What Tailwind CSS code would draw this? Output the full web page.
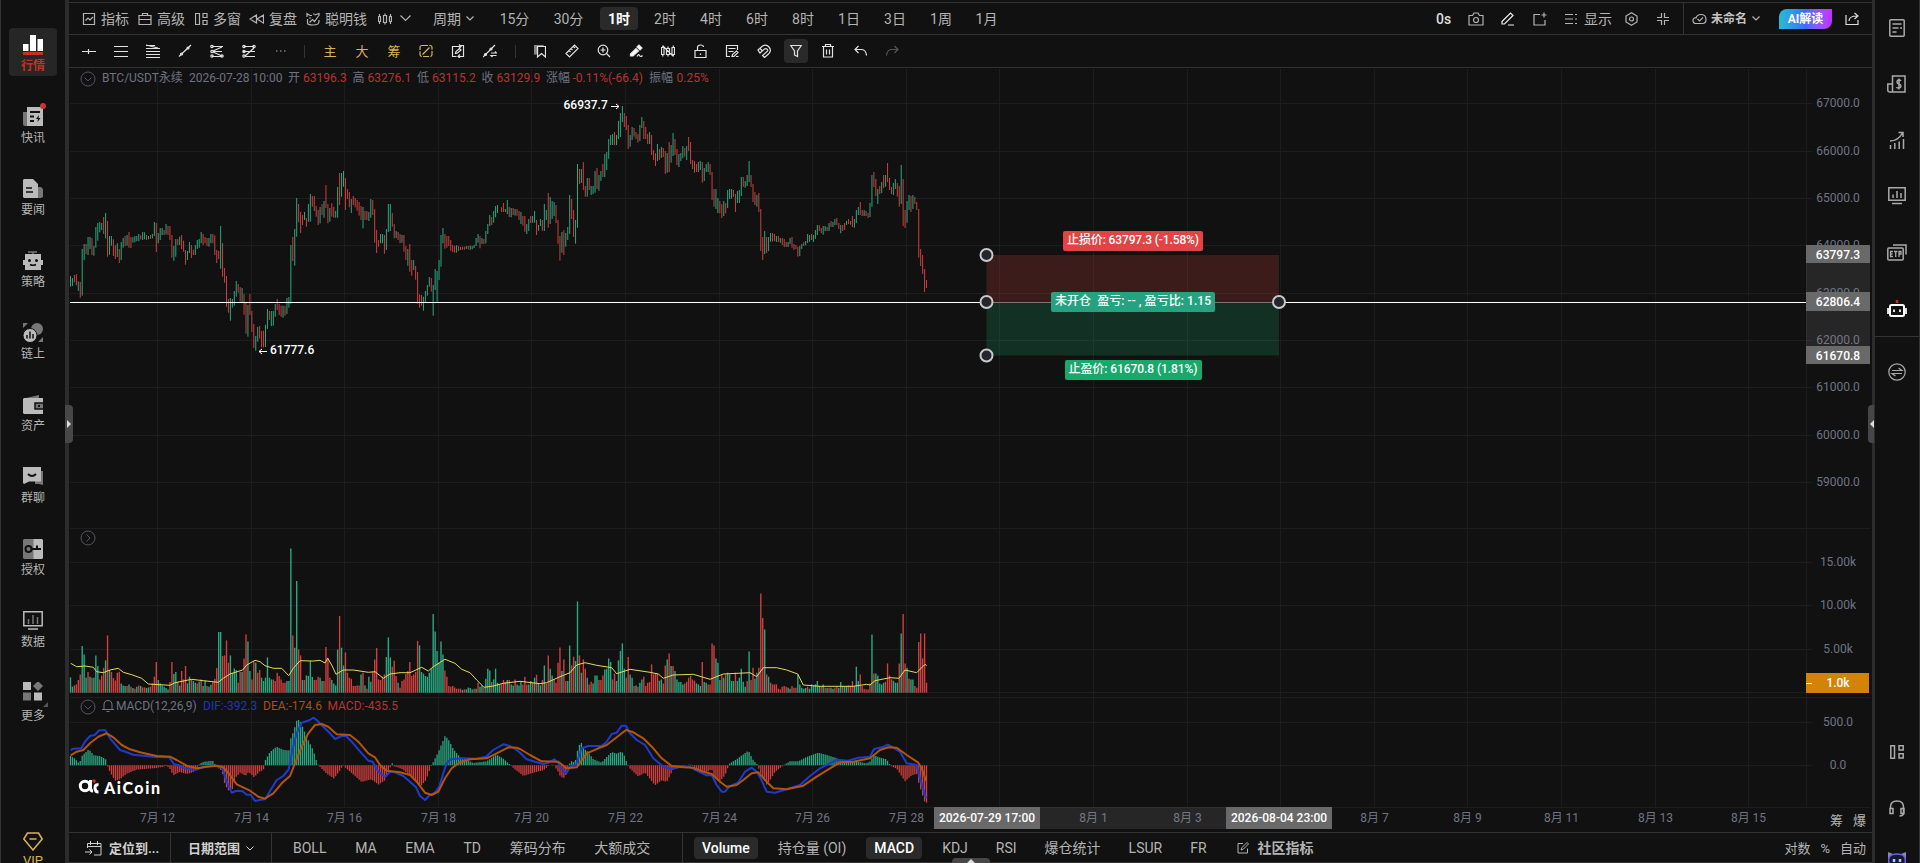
<!DOCTYPE html>
<html lang="zh-CN">
<head>
    <meta charset="UTF-8">
    <meta name="viewport" content="width=device-width, initial-scale=1.0">
    <title>AiCoin - BTC/USDT永续</title>
    <script src="https://cdn.jsdelivr.net/npm/@tailwindcss/browser@4"></script>
</head>
<body class="bg-[#111111] text-[#b4b4b4] font-['Roboto','Noto_Sans_CJK_SC',sans-serif] h-screen w-screen overflow-hidden flex">

    <!-- left navigation -->
    <nav class="relative w-[65px] shrink-0 border-l border-[#333] flex flex-col items-center text-xs fill-none stroke-none">
        <div class="mt-7 w-12 h-12 shrink-0 rounded bg-[#262626] flex flex-col items-center pt-[7px] text-[#c5301f] font-bold">
            <svg class="w-5 h-5 shrink-0" viewBox="0 0 20 20"><path fill="#fff" d="M0 9h5.500v7H0zM7 0h6v16H7zM14.500 4H20v12h-5.500z"/><path fill="#c5301f" d="M0 17h20v3H0z"/></svg>
            <span class="leading-4 mt-[3px]">行情</span>
        </div>
        <a class="relative h-[72px] mt-[31px] flex flex-col items-center shrink-0">
            <svg class="w-5 h-5" viewBox="0 0 20 20"><path fill="#777" d="M0 5h5v14H2a2 2 0 0 1-2-2z"/><path fill="#bbb" d="M4 0h14l2 2v17H4z"/><path stroke="#111" stroke-width="1.800" d="M7 5h10M7 9.500h4M7 14h4"/><path fill="#111" d="M16 8l-3 4h2l-.5 3 3-4h-2z"/></svg>
            <span class="absolute -top-[4px] left-[19px] w-[6px] h-[6px] rounded-full bg-[#c73635]"></span>
            <span class="leading-4 mt-[3px]">快讯</span>
        </a>
        <a class="h-[72px] flex flex-col items-center shrink-0">
            <svg class="w-5 h-5" viewBox="0 0 20 20"><path fill="#777" d="M13 8h5l2 2v8l-2 1h-5z"/><path fill="#bbb" d="M1 0h9l5 5v14H1l-1-1V1z"/><path stroke="#111" stroke-width="1.600" d="M3 9h6M3 13h7"/></svg>
            <span class="leading-4 mt-[3px]">要闻</span>
        </a>
        <a class="h-[72px] flex flex-col items-center shrink-0">
            <svg class="w-5 h-5" viewBox="0 0 20 20"><path stroke="#777" stroke-width="1.500" d="M5 1h9M10 1v3"/><path fill="#bbb" d="M2 3h16v6h2v5h-2v5H2v-5H0V9h2z"/><circle cx="6.500" cy="9.500" r="1.500" fill="#111"/><circle cx="13.500" cy="9.500" r="1.500" fill="#111"/><path stroke="#111" stroke-width="1.500" d="M7 13.500q3 1.500 6 0"/></svg>
            <span class="leading-4 mt-[3px]">策略</span>
        </a>
        <a class="h-[72px] flex flex-col items-center shrink-0">
            <svg class="w-5 h-5" viewBox="0 0 20 20"><circle cx="14" cy="6" r="6" fill="#777"/><path fill="#777" d="M0 0h5L0 5zM20 19h-5l5-5z"/><circle cx="7" cy="12.500" r="7" fill="#bbb" stroke="#111"/><path stroke="#111" stroke-width="1.500" d="M4 12v3.500M7 8.500v7M10 11v4.500"/></svg>
            <span class="leading-4 mt-[3px]">链上</span>
        </a>
        <a class="h-[72px] flex flex-col items-center shrink-0">
            <svg class="w-5 h-5" viewBox="0 0 20 20"><path fill="#777" d="M3 3l13-3v3z"/><path fill="#bbb" d="M1 3h19v16H1l-1-1V4z"/><path stroke="#111" stroke-width="1.500" fill="#777" d="M20 8h-8v6h8"/><path stroke="#111" stroke-width="2" d="M15 11h2"/></svg>
            <span class="leading-4 mt-[3px]">资产</span>
        </a>
        <a class="h-[72px] flex flex-col items-center shrink-0">
            <svg class="w-5 h-5" viewBox="0 0 20 20"><path fill="#777" d="M12 4h8v14l-4-1h-4z"/><path fill="#bbb" d="M0 0h18v14.500H6L1 17l-1-1z"/><path stroke="#111" stroke-width="1.800" d="M5 7q4 4 8 0"/></svg>
            <span class="leading-4 mt-[3px]">群聊</span>
        </a>
        <a class="h-[72px] flex flex-col items-center shrink-0">
            <svg class="w-5 h-5" viewBox="0 0 20 20"><path fill="#777" d="M1 0h10v20H1l-1-1V1z"/><path fill="#bbb" d="M10.500 0H19l1 1v18l-1 1h-8.500z"/><circle cx="5.500" cy="10" r="3" stroke="#111" stroke-width="2"/><path stroke="#111" stroke-width="2" d="M8 10h10M14 6.500V10"/></svg>
            <span class="leading-4 mt-[3px]">授权</span>
        </a>
        <a class="h-[71px] flex flex-col items-center shrink-0">
            <svg class="w-5 h-5" viewBox="0 0 20 20"><path stroke="#bbb" stroke-width="1.500" d="M.8.8h18.400v14H.8zM5 18h10"/><path stroke="#777" stroke-width="1.500" d="M5.500 8v5M10 4v9M14.500 6v7"/></svg>
            <span class="leading-4 mt-[3px]">数据</span>
        </a>
        <a class="relative h-[149px] flex flex-col items-center shrink-0">
            <svg class="w-5 h-5" viewBox="0 0 20 20"><path fill="#bbb" d="M0 0h8v8H0zM11 10.500h8v8h-8z"/><path fill="#777" d="M15 -1l5 5-5 5-5-5zM0 10.500h8v8H0z"/></svg>
            <svg class="absolute top-[20px] left-[22px] w-[5px] h-[5px]" viewBox="0 0 5 5"><path fill="#555" d="M5 0v5H0z"/></svg>
            <span class="leading-4 mt-[6px]">更多</span>
        </a>
        <a class="flex flex-col items-center shrink-0 text-[#dbb254] text-[13px]">
            <svg class="w-5 h-5" viewBox="0 0 20 20"><path stroke="#dbb254" stroke-width="1.500" d="M4.500 2h11L19.200 8 10 19 .8 8zM6.500 8h7"/></svg>
            <span class="leading-4 mt-[2px]">VIP</span>
        </a>
    </nav>

    <!-- left splitter -->
    <div class="relative w-1 shrink-0 bg-[#2c2c2c]">
        <div class="absolute z-10 left-0 top-[405px] w-2 h-[38px] rounded-r bg-[#474747] flex items-center">
            <svg class="w-[6px] h-2 fill-[#ddd]" viewBox="0 0 6 8"><path d="M2 0l4 4-4 4z"/></svg>
        </div>
    </div>

    <main class="w-[1803px] shrink-0 flex flex-col">
        <!-- period bar -->
        <header class="mt-[2px] h-8 border-t border-[#333] flex items-center text-sm leading-none pl-[13px] fill-none stroke-current stroke-[1.2] shrink-0">
            <div class="w-14 flex items-center gap-[5px]"><svg class="w-[14px] h-[14px]" viewBox="0 0 14 14"><path d="M1.500 1.500h11v11h-11zM3.500 8.500L6 6l2 2 3-3"/></svg>指标</div>
            <div class="w-[57px] flex items-center gap-[5px]"><svg class="w-[14px] h-[14px]" viewBox="0 0 14 14"><path d="M1 3.500h12v9H1zM4.500 3.500v-2h5v2M1 7.500h12"/></svg>高级</div>
            <div class="w-[54px] flex items-center gap-[5px]"><svg class="w-[13px] h-[14px]" viewBox="0 0 13 14"><path d="M.5 1.500h4v11h-4zM8 1.500h4v4H8zM8 8.500h4v4H8z"/></svg>多窗</div>
            <div class="w-[57px] flex items-center gap-[5px]"><svg class="w-[15px] h-[14px]" viewBox="0 0 15 14"><path d="M7.500 3v8L1 7zM14.500 3v8L8 7z"/></svg>复盘</div>
            <div class="w-[72px] flex items-center gap-[5px]"><svg class="w-[14px] h-[14px]" viewBox="0 0 14 14"><path d="M1 5V1.500L4 3.500h2M8.500 3L13 1.500V4M1.500 7v4q0 2 5.500 2t6-3V8M3.500 10.500l3-3 2 2L12.500 4M3 6h2M7 2h1.500"/></svg>聪明钱</div>
            <svg class="w-[14px] h-[14px] mr-2" viewBox="0 0 14 14"><path d="M.5 4.500h2v5h-2zM5.500 3.500h3v7h-3zM11.500 4.500h2v5h-2zM1.500 2v2.500M1.500 9.500V12M7 1.500v2M7 10.500v2M12.500 2v2.500M12.500 9.500V12"/></svg>
            <svg class="w-[11px] h-[7px] mr-[22px]" viewBox="0 0 11 7"><path d="M.5.5l5 5 5-5"/></svg>
            <span class="w-[33px]">周期</span>
            <svg class="w-2 h-[5px] mr-[14px]" viewBox="0 0 8 5"><path d="M.5.5L4 4 7.500.5"/></svg>
            <span class="w-[53px] text-center">15分</span>
            <span class="w-[55px] text-center">30分</span>
            <span class="w-[38px] h-[23px] mx-[4px] rounded bg-[#2a2a2a] text-white font-bold flex items-center justify-center">1时</span>
            <span class="w-[46px] text-center">2时</span>
            <span class="w-[46px] text-center">4时</span>
            <span class="w-[46px] text-center">6时</span>
            <span class="w-[46px] text-center">8时</span>
            <span class="w-[46px] text-center">1日</span>
            <span class="w-[46px] text-center">3日</span>
            <span class="w-[46px] text-center">1周</span>
            <span class="w-[45px] text-center">1月</span>

            <span class="ml-auto w-[32px] text-[#ddd] font-medium">0s</span>
            <svg class="w-4 h-[14px] mr-[17px]" viewBox="0 0 16 14"><path d="M1 3.500h3.500L6 1h4l1.500 2.500H15v9.500H1z"/><circle cx="8" cy="8" r="2.500"/></svg>
            <svg class="w-[14px] h-[14px] mr-[18px] stroke-[#eee]" viewBox="0 0 14 14"><path d="M1 9.500L9.500 1 12 3.500 3.500 12H1zM7 13h6"/></svg>
            <svg class="w-[14px] h-[14px] mr-[18px]" viewBox="0 0 14 14"><path d="M7 2.500H1v10.500h11V8M11 .5v5M8.500 3h5"/></svg>
            <svg class="w-[13px] h-[12px] mr-[6px]" viewBox="0 0 13 12"><path d="M0 1.500h8M0 6h8M0 10.500h8M10 1.500h2M10 6h2M10 10.500h2"/></svg>
            <span class="w-[41px]">显示</span>
            <svg class="w-[13px] h-[14px] mr-[19px]" viewBox="0 0 13 14"><path d="M6.500.8L12 4v6l-5.500 3.200L1 10V4z"/><circle cx="6.500" cy="7" r="2"/></svg>
            <svg class="w-3 h-3 mr-[14px]" viewBox="0 0 12 12"><path d="M4.500 0v4.500H0M7.500 0v4.500H12M4.500 12V7.500H0M7.500 12V7.500H12"/></svg>
            <div class="h-8 border-l border-[#333] mr-2"></div>
            <svg class="w-[15px] h-3 mr-1" viewBox="0 0 15 12"><path d="M4 10.500Q1 10.500 1 7.500T4 5Q5 1.500 9 1.500q5 0 5 5 0 4-3.500 4zM5.500 6l2 2L11 4.500"/></svg>
            <span class="text-xs font-bold w-[41px] text-[#c4c4c4]">未命名</span>
            <svg class="w-2 h-[5px] mr-[19px]" viewBox="0 0 8 5"><path d="M.5.5L4 4 7.500.5"/></svg>
            <span class="w-[53px] h-5 rounded-tl-lg rounded-br-lg bg-linear-to-r from-[#2bbcd0] via-[#3d6bff] to-[#c52bff] text-white text-xs font-bold flex items-center justify-center">AI解读</span>
            <svg class="w-[14px] h-[13px] ml-[13px] mr-[13px] stroke-[#ddd]" viewBox="0 0 14 13"><path d="M1 3v9.500h12V8M4 9q0-5 8-5M9.500 1l3.500 3-3.500 3"/></svg>
        </header>

        <!-- drawing tools -->
        <div class="h-[34px] border-y border-[#333] flex items-center text-[13px] leading-none text-[#e2e2e2] fill-none stroke-current stroke-[1.2] pl-1 shrink-0">
            <span class="w-8 flex justify-center"><svg class="w-[14px] h-[14px]" viewBox="0 0 14 14"><path d="M0 7.500h14M6.500 5v5"/></svg></span>
            <span class="w-8 flex justify-center"><svg class="w-[14px] h-[14px]" viewBox="0 0 14 14"><path d="M0 2.500h14M0 7.500h14M0 12.500h14"/></svg></span>
            <span class="w-8 flex justify-center"><svg class="w-[14px] h-[14px]" viewBox="0 0 14 14"><path d="M0 1.500h9M0 4.500h14M0 7.500h14M0 10.500h14M0 13.500h14M0 1l12 3"/></svg></span>
            <span class="w-8 flex justify-center"><svg class="w-[14px] h-[14px]" viewBox="0 0 14 14"><path d="M1 12.500L13 1"/><circle cx="3.500" cy="10" r="1"/><circle cx="10" cy="4" r="1"/></svg></span>
            <span class="w-8 flex justify-center"><svg class="w-[14px] h-[14px]" viewBox="0 0 14 14"><path d="M2.500 2.500H13M3 7.500h9M2 12.500h10M3 7l9-4M3 8l9 4"/><circle cx="2" cy="2.500" r="1.200"/><circle cx="2" cy="7.500" r="1.200"/><circle cx="12" cy="12" r="1.200"/><circle cx="2" cy="12" r="1.200"/></svg></span>
            <span class="w-8 flex justify-center"><svg class="w-[14px] h-[14px]" viewBox="0 0 14 14"><path d="M2 2.500h10M1 7.500h12M3 12.500h10M3 12l9-8"/><circle cx="2" cy="2.500" r="1.200"/><circle cx="2" cy="7.500" r="1.200"/><circle cx="12" cy="2.500" r="1.200"/><circle cx="2" cy="12" r="1.200"/></svg></span>
            <span class="w-[31px] flex justify-center text-[#aaa]"><svg class="w-[10px] h-[2px]" viewBox="0 0 10 2"><path d="M0 1h1.500M4 1h1.500M8 1h1.500"/></svg></span>
            <span class="w-[17px] flex justify-center"><i class="h-[13px] w-px bg-[#333]"></i></span>
            <span class="w-8 text-center text-[#dbb254] ml-[1px]">主</span>
            <span class="w-8 text-center text-[#dbb254]">大</span>
            <span class="w-8 text-center text-[#dbb254]">筹</span>
            <span class="w-8 flex justify-center text-[#dbb254]"><svg class="w-[14px] h-[14px]" viewBox="0 0 14 14"><rect x="1" y="1.500" width="12" height="11" rx="2" stroke-dasharray="6 1.200"/><path d="M3.500 10.500l7-7" stroke-width="1.300"/></svg></span>
            <span class="w-8 flex justify-center"><svg class="w-[14px] h-[14px]" viewBox="0 0 14 14"><path d="M5.500 12.500H1.500V2.500H10M8 .5l2 2-2 2M8.500 1.500h4v11h-5M9 10.500l-2 2 2 1.500M4.500 9.500L5 7.500 8.500 4.500 10 6 6.500 9z"/></svg></span>
            <span class="w-8 flex justify-center"><svg class="w-[14px] h-[14px]" viewBox="0 0 14 14"><path d="M0 13L12 1"/><circle cx="2.500" cy="10.500" r="1"/><circle cx="8" cy="5" r="1"/><path d="M8 9h5.500L12 7.500M13.500 11.500H8L9.500 13"/></svg></span>
            <span class="w-[18px] flex justify-center"><i class="h-[13px] w-px bg-[#333]"></i></span>
            <span class="w-8 flex justify-center"><svg class="w-3 h-[14px]" viewBox="0 0 12 14"><path fill="#888" stroke="#888" d="M.5 10V1.500H9v1H3.500v7z"/><path d="M3.500 2.500h8v10.500L7.500 9.500l-4 3.500z"/></svg></span>
            <span class="w-8 flex justify-center"><svg class="w-[14px] h-[14px]" viewBox="0 0 14 14"><path d="M1 9.500L9.500 1 13 4.500 4.500 13zM6 4.500l1.500 1.500M4 6.500L5.500 8M8.500 2.500L10 4"/></svg></span>
            <span class="w-8 flex justify-center"><svg class="w-[14px] h-[14px]" viewBox="0 0 14 14"><circle cx="6" cy="6" r="4.800"/><path d="M9.500 9.500L13 13M3.500 6h5M6 3.500v5"/></svg></span>
            <span class="w-8 flex justify-center"><svg class="w-[14px] h-[14px]" viewBox="0 0 14 14"><path fill="#fff" d="M1.500 10L7 4.500 9.500 7 4 12H1.500zM8 3l2-2 3 3-2 2z"/><path d="M8 12.500q1.500-3 2.500-1t3 0"/></svg></span>
            <span class="w-8 flex justify-center"><svg class="w-[14px] h-[14px]" viewBox="0 0 14 14"><path d="M.5 3.500h2.500v7H.5zM5.500 4.500h3v6h-3zM11 3.500h2.500v7H11zM1.800 1.500v2M1.800 10.500v2M7 2.500v2M7 10.500v2M12.300 1.500v2M12.300 10.500v2M2 2l10 10"/></svg></span>
            <span class="w-8 flex justify-center"><svg class="w-[13px] h-[14px]" viewBox="0 0 13 14"><path d="M1 6.500h11v7H1zM3.500 6.500V3.500q0-2.500 3-2.500t3 2M6.500 9.500v1.500"/></svg></span>
            <span class="w-8 flex justify-center"><svg class="w-[14px] h-[14px]" viewBox="0 0 14 14"><path d="M5 12.500H1.500v-11h11V6M3.500 4.500h7M3.500 7.500h5M7 12.500l.5-2 4-3.500L13 8.500l-4 4zM11 12.500h2.500"/></svg></span>
            <span class="w-8 flex justify-center"><svg class="w-[14px] h-[14px]" viewBox="0 0 14 14"><path d="M1 6l4-3.500q4-3 7 .5t-.5 7L7.500 13.500 5.500 11.500 9.500 8q2-1.500.8-2.700T7.500 5L3 9zM3 4.500L5 6.500"/></svg></span>
            <span class="w-6 h-6 mx-[4px] rounded bg-[#2a2a2a] flex items-center justify-center"><svg class="w-3 h-[14px]" viewBox="0 0 12 14"><path d="M.7 1.500h10.600L7.500 7v5.500L4.500 11V7z"/></svg></span>
            <span class="w-8 flex justify-center"><svg class="w-3 h-[14px]" viewBox="0 0 12 14"><path d="M0 2.500h12M3.500 2.500v-2h5v2M1.500 2.500V13h9V2.500M4.500 5.500v5M7.500 5.500v5"/></svg></span>
            <span class="w-8 flex justify-center"><svg class="w-[13px] h-3" viewBox="0 0 13 12"><path d="M4.500 1L1 4.500 4.500 8M1 4.500h6q5 0 5.500 6"/></svg></span>
            <span class="w-8 flex justify-center text-[#555]"><svg class="w-[13px] h-3" viewBox="0 0 13 12"><path d="M8.500 1L12 4.500 8.500 8M12 4.500H6q-5 0-5.500 6"/></svg></span>
        </div>

        <!-- chart: the viewBox uses page pixels -->
        <svg class="w-[1803px] h-[764px] shrink-0 text-xs" viewBox="69 68 1803 764">
            <g id="grid" stroke="#1c1d20"></g>
            <g id="volume"></g>
            <g id="macd"></g>
            <g id="candles"></g>
            <path d="M70 302.500H1806" stroke="#fff"/>
            <g id="lines" fill="none" stroke-linejoin="round"></g>

            <!-- legends -->
            <g fill="none" stroke="#55565c">
                <circle cx="88" cy="79" r="7"/><path d="M84.500 77.500l3.500 3.500 3.500-3.500"/>
                <circle cx="88" cy="538" r="7"/><path d="M86.500 534.500l3.500 3.500-3.500 3.500"/>
                <circle cx="88" cy="707" r="7"/><path d="M84.500 705.500l3.500 3.500 3.500-3.500"/>
                <path stroke="#777986" d="M102 709.500h12M104 709v-4q0-4.500 4-4.500t4 4.500v4M106.500 711.500h3"/>
            </g>
            <g fill="#6f7280">
                <text x="102" y="82">BTC/USDT永续</text><text x="189" y="82">2026-07-28 10:00</text>
                <text x="288" y="82">开</text><text x="352.500" y="82">高</text><text x="417" y="82">低</text>
                <text x="481.500" y="82">收</text><text x="546" y="82">涨幅</text><text x="649" y="82">振幅</text>
                <text x="116" y="710">MACD(12,26,9)</text>
            </g>
            <g fill="#b83434">
                <text x="303" y="82">63196.3</text><text x="367.500" y="82">63276.1</text><text x="432" y="82">63115.2</text>
                <text x="496.500" y="82">63129.9</text><text x="572.500" y="82">-0.11%(-66.4)</text><text x="676.500" y="82">0.25%</text>
                <text x="327.500" y="710">MACD:-435.5</text>
            </g>
            <text x="203" y="710" fill="#1f37b8">DIF:-392.3</text>
            <text x="263" y="710" fill="#a9520a">DEA:-174.6</text>

            <!-- high and low marks -->
            <g class="font-medium" fill="#fff">
                <text x="563.500" y="109">66937.7</text><text x="270" y="354">61777.6</text>
                <path fill="none" stroke="#fff" d="M611 106.500h8M616 104l3 2.500-3 2.500M267 351.500h-8M262 349l-3 2.500 3 2.500"/>
            </g>

            <!-- short position tool -->
            <path fill="#e04444" fill-opacity=".21" d="M986.500 255H1279v47.500H986.500z"/>
            <path fill="#17a86b" fill-opacity=".21" d="M986.500 302.500H1279V355.500H986.500z"/>
            <path stroke="#777" d="M987 302.500h292"/>
            <g fill="#23262d" stroke="#c9c9c9" stroke-width="2">
                <circle cx="986.500" cy="255" r="6"/><circle cx="986.500" cy="302" r="6"/>
                <circle cx="986.500" cy="355.500" r="6"/><circle cx="1279" cy="302" r="6"/>
            </g>
            <rect x="1063" y="231" width="140" height="20" rx="2" fill="#e04444"/>
            <rect x="1051" y="292" width="164" height="20" rx="2" fill="#26a281"/>
            <rect x="1065" y="360" width="137" height="20" rx="2" fill="#18a86b"/>
            <g class="font-medium" fill="#fff" text-anchor="middle">
                <text x="1133" y="244" textLength="132">止损价: 63797.3 (-1.58%)</text>
                <text x="1133" y="305" textLength="156" class="whitespace-pre">未开仓  盈亏: -- , 盈亏比: 1.15</text>
                <text x="1133" y="373" textLength="129">止盈价: 61670.8 (1.81%)</text>
            </g>

            <!-- price axis -->
            <g id="axis" fill="#6f7484" text-anchor="middle"></g>
            <path fill="#888" fill-opacity=".18" d="M1806 263h64v83h-64zM1040 807h186v22h-186z"/>
            <path fill="#696969" d="M1806 245h64v18h-64zM1806 292h64v19h-64zM1806 346h64v18h-64zM934 807h106v22H934zM1226 807h106v22h-106z"/>
            <path fill="#d38407" d="M1806 673h63v20h-63z"/>
            <path stroke="#fff" d="M1806 683.500h6"/>
            <g class="font-medium" fill="#fff" text-anchor="middle">
                <text x="1838" y="259">63797.3</text><text x="1838" y="306">62806.4</text><text x="1838" y="360">61670.8</text>
                <text x="1838" y="687">1.0k</text>
                <text x="987" y="822">2026-07-29 17:00</text><text x="1279" y="822">2026-08-04 23:00</text>
            </g>
            <g class="text-[13px]" fill="#b4b4b4"><text x="1830" y="825">筹</text><text x="1853" y="825">爆</text></g>

            <!-- watermark -->
            <g fill="none" stroke="#fff" stroke-width="3">
                <circle cx="85" cy="786" r="4.700"/><path d="M90.500 780v8q0 3 2.500 3"/>
                <path d="M98.500 785q-3.500-1-3.500 3t3.500 4"/><circle cx="94" cy="781" r="1.800" fill="#c5301f" stroke="none"/>
            </g>
            <text x="104" y="794" fill="#fff" class="font-['Lato'] font-black text-[16px]" textLength="56">AiCoin</text>
        </svg>

        <!-- indicator bar -->
        <footer class="h-[31px] border-y border-[#333] flex items-center text-sm leading-none fill-none stroke-current shrink-0">
            <div class="w-[101px] pl-4 pt-px flex items-center gap-[7px] text-[13px] font-bold text-[#d0d0d0]">
                <svg class="w-[17px] h-[15px]" viewBox="0 0 17 15"><path d="M2.500 7V2.500h13.500v11.500H9M2.500 5.500H16M5.500 0v4M12.500 0v4M0 11h7M4.500 8.500L7 11l-2.500 2.500"/></svg>定位到...
            </div>
            <div class="w-[102px] h-[29px] border-x border-[#333] pl-[17px] pt-px flex items-center gap-[6px] text-[13px] font-bold text-[#d0d0d0]">
                日期范围<svg class="w-2 h-[5px]" viewBox="0 0 8 5"><path d="M.5.5L4 4 7.500.5"/></svg>
            </div>
            <div class="w-[411px] h-[29px] border-r border-[#333] pl-[13px] pt-px flex items-center gap-[12.700px]">
                <span class="px-2">BOLL</span><span class="px-2">MA</span><span class="px-2">EMA</span><span class="px-2">TD</span><span class="px-2">筹码分布</span><span class="px-2">大额成交</span>
            </div>
            <div class="pl-[11px] pt-px flex items-center gap-3">
                <span class="px-2 h-[22px] rounded bg-[#2a2a2a] text-white font-medium flex items-center">Volume</span>
                <span class="px-2">持仓量 (OI)</span>
                <span class="px-2 h-[22px] rounded bg-[#2a2a2a] text-white font-medium flex items-center">MACD</span>
                <span class="px-2">KDJ</span><span class="px-2">RSI</span><span class="px-2">爆仓统计</span><span class="px-2">LSUR</span><span class="px-2">FR</span>
                <span class="pl-[10px] flex items-center gap-[9px] font-bold"><svg class="w-3 h-3" viewBox="0 0 12 12"><path d="M6 1.500H1v9.500h9.500V6.500M4 8l1-2.500L10 .5 11.500 2l-5 5z"/></svg>社区指标</span>
            </div>
            <div class="ml-auto mr-[6px] pt-px flex items-center gap-[10px] text-[13px]"><span>对数</span><span>%</span><span>自动</span></div>
        </footer>
    </main>

    <!-- right splitter -->
    <div class="relative w-[3px] shrink-0 bg-[#2c2c2c]">
        <div class="absolute z-10 -left-1 top-[405px] w-[6px] h-[38px] rounded-l bg-[#474747] flex items-center justify-end">
            <svg class="w-1 h-2 fill-[#ddd]" viewBox="0 0 4 8"><path d="M4 0L0 4l4 4z"/></svg>
        </div>
    </div>

    <!-- right tools -->
    <aside class="w-[45px] shrink-0 border-r border-[#333] flex flex-col items-center fill-none stroke-[#aaa] stroke-[1.5]">
        <div class="h-14 flex items-center shrink-0"><svg class="w-4 h-[18px]" viewBox="0 0 16 18"><rect x=".8" y=".8" width="14.400" height="16.400" rx="1"/><path d="M3.500 5h9M3.500 9h6M3.500 13h4M11 9h2"/></svg></div>
        <div class="h-14 flex items-center shrink-0"><svg class="w-5 h-[18px]" viewBox="0 0 20 18"><path d="M5.500 17V1H18v16H3q-2.200 0-2.200-2V9h4.700"/><path d="M14 6q-.5-1-2.200-1T10 6.700 12 9t2 2.200T11.800 13 9.500 12M12 3.500v11"/></svg></div>
        <div class="h-14 flex items-center shrink-0"><svg class="w-4 h-[18px]" viewBox="0 0 16 18"><path d="M1.500 18v-4M5.800 18v-6M10.200 18v-7.500M14.500 18V8M1 10q8 0 12.500-8M9.500 1.500H14V6"/></svg></div>
        <div class="h-14 flex items-center shrink-0"><svg class="w-[18px] h-[18px]" viewBox="0 0 18 18"><path d="M.8.8h16.400v12.400H.8zM4 16.500h10M5 7.500V11M9 4v7M13 6v5"/></svg></div>
        <div class="h-14 flex items-center shrink-0"><svg class="w-5 h-[17px]" viewBox="0 0 20 17"><path d="M6 1h13v9.500"/><rect x=".8" y="4" width="15.400" height="12" rx="1"/><path stroke-width="1.300" d="M6 7.500H3.500v5H6M3.500 10h2M7 7.500h3.500M8.700 7.500v5.500M12 13V7.500h2v2.500h-2"/></svg></div>
        <div class="h-14 flex items-center shrink-0"><svg class="w-5 h-[17px]" viewBox="0 0 20 17"><path stroke="#c5301f" stroke-width="2.500" d="M10 0v3"/><rect x="3" y="5" width="14" height="11" rx="1.500" stroke="#fff" stroke-width="2"/><path stroke="#ddd" stroke-width="2" d="M1 8v6M19 8v6M7 9.500v2.500M13 9.500v2.500"/></svg></div>
        <div class="w-full h-px bg-[#333] shrink-0"></div>
        <div class="h-[70px] flex items-center shrink-0"><svg class="w-[18px] h-[18px] stroke-[1.2]" viewBox="0 0 18 18"><circle cx="9" cy="9" r="8.200"/><path d="M4 7.500h10L10.500 5M14 10.500H4l3.500 2.500"/></svg></div>
        <div class="mt-auto h-14 flex items-center shrink-0"><svg class="w-[14px] h-[14px]" viewBox="0 0 14 14"><path d="M.8.8h3.700v12.400H.8zM9 .8h4.200v4.200H9zM9 8.800h4.200V13H9z"/></svg></div>
        <div class="h-14 flex items-center shrink-0"><svg class="w-4 h-[17px]" viewBox="0 0 16 17"><path d="M1.500 9V7q0-6 6.500-6t6.500 6v6q0 3-4 3M1 8.500h3v5H1zM12 8.500h3v5h-3z"/></svg></div>
        <div class="h-[27px] flex items-end shrink-0 overflow-hidden"><svg class="w-5 h-[11px]" viewBox="0 0 20 11"><path fill="#8a8d9e" stroke="none" d="M1 0l5 2h8l5-2v11H1z"/><path fill="#16182c" stroke="#6a5df0" d="M2 11q-2-9 8-9t8 9"/><path stroke="#9fd0ff" stroke-width="2.500" d="M7 7v3M13 7v3"/></svg></div>
    </aside>

    <div class="fixed bottom-0 left-[952px] w-[38px] h-[5px] rounded-t bg-[#474747] flex justify-center items-end"><svg class="w-2 h-[4px] fill-[#ddd]" viewBox="0 0 8 4"><path d="M0 4l4-4 4 4z"/></svg></div>

    <script>
        const UP = '#2aa881', DOWN = '#cf3f3f';
        const FIRST = 70.5, STEP = 1.95;
        const el = id => document.getElementById(id);

        // Series are stored in thirds of a pixel; each row is "startX|bar,bar,...".
        // Candle bar: colour, top, bottom. Volume bar: colour, height.
        const candleRows = [
            [60, 120, '32|g468 500,g474 498,r465 487,r462 496,g484 513,r486 533,g387 527,g372 420,r372 402,g351 405,g351 387,r354 405,g378 407,g321 383,g309 362,g306 337,g309 330,r291 342,g279 355,r303 410'],
            [60, 120, '149|g348 404,g348 377,r358 408,r376 417,g370 411,r387 429,g366 420,g354 383,r348 378,g345 377,r336 383,r351 384,g352 368,g348 367,g348 364,g342 363,r346 358,g336 360,g337 358,r345 360'],
            [60, 120, '267|g348 358,r345 357,g342 355,g306 348,r309 396,g339 370,g324 360,g324 345,r330 345,g312 343,r318 345,r318 360,r345 413,g378 422,g357 410,r357 375,g350 375,r345 387,r362 395,r390 434'],
            [60, 120, '384|g393 420,g366 399,r375 414,r389 405,g375 405,g360 387,g357 383,g336 370,r342 375,r351 370,r354 378,g354 380,g342 370,r342 370,r346 405,r390 429,r393 417,g318 446,r369 470,r444 488'],
            [60, 120, '500|r468 560,r537 578,g534 602,g537 563,g513 557,g483 530,r492 518,r501 545,g504 546,r522 584,r546 641,g555 650,r522 585,r573 636,r612 684,g648 692,g621 665,r618 656,r633 682,r632 682'],
            [60, 120, '617|g614 681,g567 627,r573 600,g573 618,g573 617,g552 590,r537 570,r552 585,r557 590,g557 593,r558 587,g534 582,g531 563,g375 551,r351 423,g327 437,g234 350,r252 307,r276 339,r285 315'],
            [60, 120, '735|g276 300,r294 320,g252 305,g222 305,r228 260,r228 273,r258 290,r270 315,g261 310,r252 285,g243 293,r195 264,r252 310,g264 305,r250 290,r261 293,g273 293,g201 293,r159 255,g159 230'],
            [60, 120, '851|g153 200,r174 270,r207 237,r216 262,g237 279,r228 255,r234 262,r240 272,r246 287,r258 300,g261 325,r273 300,r273 300,g276 303,g237 293,r240 285,r268 368,r330 399,r360 380,g342 370'],
            [60, 120, '969|g342 370,r345 401,g327 390,g252 336,g252 333,r279 320,r312 355,g333 354,r336 360,r342 370,g345 368,r345 395,r378 420,g387 437,r372 455,r420 467,g420 450,r438 479,r456 551,r523 563'],
            [60, 120, '1087|r525 557,g530 572,g513 546,g495 527,g471 500,r474 515,g495 587,g447 510,g453 545,g420 480,g345 440,g324 370,r342 386,r348 383,r348 378,r360 392,r375 396,r378 398,g376 398,r378 393'],
            [60, 120, '1204|r381 390,r380 389,r380 389,g378 387,r378 388,g377 389,g378 388,g375 384,g354 378,g342 368,r348 385,g354 372,r357 372,g333 370,g312 342,g285 318,r291 315,g273 308,g258 292,g255 279'],
            [60, 120, '1322|r262 276,r249 276,g267 276,g240 282,r261 291,g264 292,r264 285,g267 287,r267 287,r273 300,g276 312,r288 317,r288 335,g312 342,g297 333,r288 309,g288 308,g273 308,r300 345,g315 332'],
            [520, 90, '61|g387 408,r390 422,g342 423,g360 390,r309 413,g321 402,g333 387,g336 378,r345 399,r390 461,r438 512,g426 488,r420 495,g429 470,g411 450,g315 432,r327 387,r360 441,g390 461,g222 413'],
            [520, 90, '179|r237 282,g237 279,r216 300,r288 320,g264 320,r264 300,g288 315,g288 312,g243 308,r234 297,g255 302,g243 273,r222 261,g192 261,g186 240,g147 206,g135 165,g132 165,r126 165,g135 165'],
            [520, 90, '296|g93 147,g69 141,g48 96,r69 111,r78 120,r105 177,g135 170,g111 150,r114 140,r126 147,r132 158,g105 153,g81 114,r93 147,r111 147,r132 162,g126 162,r135 195,r180 210,r190 228'],
            [520, 90, '413|g162 213,r177 210,g171 204,r174 201,r183 252,g189 248,r156 246,g165 218,g129 198,r147 195,r177 225,g192 231,g189 213,g168 205,r174 200,g168 210,r141 183,r156 222,r210 237,r213 248'],
            [520, 90, '531|r222 246,g216 246,g213 240,r216 278,g234 273,g222 246,g216 246,r222 255,r246 330,r297 350,g297 357,g324 369,r333 370,r342 384,g333 378,r339 370,g300 354,g297 327,g297 326,r300 320'],
            [520, 90, '647|r312 366,g303 339,g300 339,g261 318,r261 290,g273 293,g255 288,g213 276,r255 291,r282 336,r306 345,g315 350,r309 366,r357 483,r441 510,g423 492,r441 489,g441 483,g429 455,r429 455'],
            [520, 90, '765|r432 453,g438 456,r438 456,g444 458,r444 465,r447 471,r456 471,g456 471,g444 462,r441 473,r462 480,r465 477,r471 500,g468 498,g462 477,r456 468,g453 466,g432 459,g435 455,r432 450'],
            [520, 90, '882|g435 456,g420 447,g405 435,r405 423,r414 430,g408 434,g408 423,r411 423,g399 423,r393 411,g396 411,g387 405,r384 405,r399 417,g405 430,r405 423,r399 420,g393 405,r387 402,r393 404'],
            [520, 90, '999|r378 411,g387 413,g360 399,g351 375,r336 375,r360 378,g360 378,r363 378,r369 384,g339 381,g255 350,r246 291,r267 318,g297 342,r288 312,g276 309,r255 294,g255 290,r219 276,r264 300'],
            [520, 90, '1116|r291 312,g279 315,g267 297,r279 320,r288 350,g225 342,r267 408,r360 414,g333 398,g315 360,r318 366,g315 357,r321 342,r336 360,r357 503,r477 528,r495 552,r537 606,r570 594']
        ];

        const volumeRows = [
            [60, '32|g46,g18,r22,r25,r38,r55,g140,g115,g45,r62,g48,r45,g45,g112,g80,r40,r52,r75,g97,r172,g68,r62,r44,r37,r60,r63,g28,g22,g20,r20,g25,r18,g14,r12,g18,r22,g20,r16,r16,g14,g16,r18,r28,r48'],
            [60, '290|r92,g38,g28,g22,g18,g14,g10,r32,r92,g56,g62,r32,g22,r65,r40,r80,g28,g48,r40,g35,g30,r28,g33,r40,g20,g36,r20,g18,g24,r32,r42,r74,g182,r110,r112,r157,r90'],
            [60, '481|g182,r110,r112,r157,r90,g112,g60,g73,g68,r30,r62,g62,r103,r175,g154,g65,r40,r95,g90,r60,r68,g45,g35,g45,g106,g45,g40,r40,r35,r60,r50,r40,r30,r30,g35,g35'],
            [60, '691|g433,r172,g135,g335,r130,r112,g38,r38,g52,g50,g95,g47,r38,r38,r48,g45,g35,r35,r137,r105,r45,g38,g28,g22,g130,r230,g135,g82,r121,r60,r45,r42,r20,r20,r22,r22,g55,r60,g22,r12,g48,g33,r62,r100'],
            [60, '949|r134,r40,r38,r48,r55,g107,g166,g106,r78,r96,r50,g30,r15,r35,r40,r56,r65,r92,r50,r55,r62,r155,g142,g62,g57,g50,g48,g60,g73,g236,g184,g125,g90,g154,g115,r67,r48,r20,r18,r20,r16,r12,r12,r12,g8,r10,g10,g16'],
            [60, '1231|g14,g10,r12,g12,r30,g18,g22,r14,g42,g72,g67,r32,g40,g72,g30,g25,r25,r38,r32,g38,r38,g25,g22,r40,g25,g22,g32,r25,r48,r25,g25,g35,r30,g45,r54,g28,g22'],
            [520, '66|r38,g82,r28,r112,g72,g52,r40,r30,r90,r136,g65,r100,r35,g35,g142,r82,r108,g95,g274,r112,g60,r100,r72,g45,r25,r33,g28,g52,g52,r38,r38,r52,g70,g72,g103,g92,r40,r58,g35,g97,g125,g148,g72,r45'],
            [520, '324|r107,g55,g45,r20,g22,r18,g30,g40,r48,r20,r30,r32,r85,r55,r58,r58,g36,g40,r28,r82,g100,r118,g80,r80,g65,g40,g32,g32,g25,r28,r33,r45,r50,r40,r36,g28,g25,g20,r92,g32,g30,r25,r25'],
            [520, '576|r148,r142,g103,g90,g38,r55,g45,r55,g60,g55,g35,g35,r60,g35,g45,g72,g33,g18,r35,g124,r38,r75,g42,g60,r75,r298,r224,g190,r55,g48,r30,r25,r25,r25,r12,r10,r18,r20,r18,g15,g12,r20,r15,r15,g55'],
            [520, '839|g25,g15,g12,g14,r18,g12,g25,g22,g25,g35,g20,r18,g25,r15,g14,r15,g15,g12,r16,r18,g14,g32,r20,g18,g20,r22,r20,r35,g20,g78,g35,r55,r20,r12,r10,r10,r28'],
            [520, '1055|g175,r58,g58,g52,g28,g25,g30,r33,r88,r52,r40,g36,g30,g30,r88,g178,r236,r88,g75,r42,g40,g40,r20,r15,r152,r178,r103,r178,r30']
        ];

        const snap = (origin, x) => Math.round((origin + x / 3 - FIRST) / STEP);
        const bar = (i, y1, y2, colour, width) => {
            const x = FIRST + i * STEP;
            return `<path d="M${x.toFixed(2)} ${y1.toFixed(1)}V${y2.toFixed(1)}" stroke="${colour}" stroke-width="${width}"/>`;
        };

        const candles = [];
        for (const [ox, oy, row] of candleRows) {
            const [start, list] = row.split('|');
            const first = snap(ox, +start);
            list.split(',').forEach((c, k) => {
                const [top, bottom] = c.slice(1).split(' ').map(Number);
                candles[first + k] = bar(first + k, oy + top / 3, oy + bottom / 3, c[0] === 'g' ? UP : DOWN, 1);
            });
        }
        el('candles').innerHTML = candles.join('');

        const volume = [];
        for (const [ox, row] of volumeRows) {
            const [start, list] = row.split('|');
            const first = snap(ox, +start);
            list.split(',').forEach((v, k) => {
                volume[first + k] = bar(first + k, 692.7, 692.7 - v.slice(1) / 3, v[0] === 'g' ? UP : DOWN, 1.4);
            });
        }
        el('volume').innerHTML = volume.join('');

        // "x y,x y" for the left half, then the right half
        const points = (left, right) => {
            const parse = (s, ox) => s.split(',').map(p => p.split(' ').map(Number)).map(([x, y]) => [ox + x / 3, y / 3]);
            return [...parse(left, 60), ...parse(right, 520)];
        };

        // heights are in thirds of a pixel too, points() scales both
        const hist = points(
            '32 28,45 20,58 5,66 28,86 48,102 30,120 28,137 18,143 -5,150 -20,165 -46,180 -42,200 -25,230 -13,290 -8,320 -2,328 -8,340 -30,360 -20,380 -26,402 -20,415 0,428 10,458 14,468 -2,486 -18,494 -55,504 -75,516 -75,528 -35,541 -22,556 -32,566 -20,582 -36,600 -18,610 -15,616 15,630 40,650 56,670 46,688 45,692 80,700 100,712 140,722 130,740 85,760 45,772 5,780 -5,800 -25,822 -40,840 -15,850 2,855 -6,880 -28,905 -50,935 -42,955 -58,975 -45,990 -8,996 8,1000 -3,1025 -10,1050 -30,1080 -65,1098 -45,1112 -5,1120 10,1135 40,1155 88,1165 78,1180 48,1200 25,1240 7,1280 12,1310 32,1330 20,1350 2,1360 -8',
            '10 -32,40 -22,70 -15,85 -2,100 3,112 -15,122 -35,135 -38,146 2,155 12,165 8,172 42,182 72,192 50,204 40,220 18,245 8,260 25,275 40,290 35,305 42,315 25,322 3,330 -10,355 -33,375 -22,405 -60,425 -45,440 -50,460 -12,490 -5,510 3,530 -10,560 -20,575 -12,585 -38,600 -48,615 -30,628 5,650 18,670 33,685 44,700 15,712 3,720 -20,740 -58,750 -45,765 -20,790 0,810 12,835 12,860 25,895 38,930 28,960 18,1000 12,1040 6,1052 12,1060 30,1075 25,1100 18,1112 -2,1130 -10,1155 -48,1175 -30,1190 -25,1198 -60,1215 -112,1222 -112');
        let macd = '', seg = 0;
        for (let i = 0; i < candles.length; i++) {
            const x = FIRST + i * STEP;
            while (seg < hist.length - 2 && hist[seg + 1][0] < x) seg++;
            const [x1, h1] = hist[seg], [x2, h2] = hist[seg + 1];
            const h = h1 + (h2 - h1) * (x - x1) / (x2 - x1);
            macd += bar(i, 765.3, 765.3 - h, h > 0 ? UP : DOWN, 1.3);
        }
        el('macd').innerHTML = macd;

        const line = (pts, colour, width) =>
            `<polyline points="${pts.map(([x, y]) => `${x.toFixed(1)},${(y + 520).toFixed(1)}`).join(' ')}" stroke="${colour}" stroke-width="${width}"/>`;
        const volumeMa = points(
            '32 430,50 440,75 438,100 442,110 455,130 458,150 450,175 445,190 457,215 464,245 475,265 492,330 496,345 488,395 478,430 482,475 487,490 475,510 462,548 450,560 435,585 421,600 425,615 437,640 445,665 445,686 467,700 445,720 422,760 423,780 421,795 429,803 415,815 435,828 463,850 450,880 450,925 457,945 455,970 475,990 462,1020 458,1050 458,1085 442,1105 453,1120 440,1155 418,1185 430,1205 448,1230 458,1250 480,1272 502,1300 498,1330 490',
            '0 484,60 491,80 488,120 470,150 458,170 435,195 428,230 436,275 443,290 461,330 448,390 457,415 462,430 475,460 465,520 463,570 478,610 462,690 458,710 470,730 443,770 443,800 450,833 462,850 495,900 499,1000 499,1040 493,1050 495,1065 482,1110 473,1137 475,1155 450,1190 458,1215 433,1220 437');
        const dif = points(
            '32 690,40 686,64 685,75 665,90 648,104 645,118 631,136 631,150 655,180 690,200 697,220 704,250 707,290 711,328 712,342 733,358 736,374 745,405 750,430 742,455 737,470 738,487 745,500 785,515 818,530 812,548 814,560 824,572 824,585 843,600 840,615 838,635 805,650 780,670 768,686 748,695 700,710 640,725 608,750 600,760 593,770 600,790 620,810 640,825 657,845 648,858 648,875 665,905 700,925 722,938 725,955 755,975 770,990 755,1005 757,1030 768,1050 785,1068 802,1080 828,1095 840,1110 825,1125 818,1138 800,1150 760,1160 730,1172 718,1210 715,1250 716,1278 710,1300 690,1330 673,1350 678,1370 690',
            '0 698,20 718,45 725,70 732,85 728,103 718,115 730,130 755,140 758,150 740,168 735,185 685,205 678,245 678,260 665,275 642,290 638,305 617,318 617,330 640,350 660,375 675,400 715,430 740,455 747,480 740,510 741,530 752,560 766,575 765,590 795,605 815,615 815,628 800,655 787,675 755,695 743,710 755,722 775,740 815,765 818,800 808,840 795,870 768,900 745,930 730,950 720,985 722,1015 713,1050 710,1062 687,1085 682,1103 674,1120 683,1140 695,1160 730,1190 735,1200 775,1218 835');
        const dea = points(
            '32 706,50 695,70 690,90 670,115 650,140 640,160 652,185 675,210 688,240 697,290 708,330 710,350 720,380 737,410 745,440 740,470 737,490 742,510 765,530 793,570 812,595 830,615 836,640 820,665 790,690 768,705 730,725 680,745 640,765 615,785 612,805 620,830 643,870 645,895 665,925 700,945 712,960 735,980 752,1020 757,1050 765,1070 785,1095 818,1115 825,1135 815,1155 775,1175 745,1200 727,1230 718,1280 715,1310 700,1345 682,1370 683',
            '0 687,30 705,65 724,115 725,140 745,170 742,200 700,235 685,260 675,290 652,318 630,340 637,370 655,400 685,425 715,455 738,490 742,520 743,550 755,575 762,600 785,620 800,650 795,670 780,695 760,715 757,735 780,760 805,800 808,850 797,890 770,930 745,960 727,1000 725,1050 715,1080 690,1105 682,1130 683,1160 705,1195 728,1205 745,1218 782');
        el('lines').innerHTML = line(volumeMa, '#e6da58', 1) + line(dif, '#1f3bcf', 2) + line(dea, '#b3550a', 2);

        // grid and axis labels
        const days = ['7月 12', '7月 14', '7月 16', '7月 18', '7月 20', '7月 22', '7月 24', '7月 26', '7月 28', '', '8月 1', '8月 3', '', '8月 7', '8月 9', '8月 11', '8月 13', '8月 15'];
        const prices = [[103.5, '67000.0'], [151.5, '66000.0'], [198.5, '65000.0'], [245.5, '64000.0'], [293.5, '63000.0'], [340.5, '62000.0'], [387.5, '61000.0'], [435.5, '60000.0'], [482.5, '59000.0'],
            [562.5, '15.00k'], [605.5, '10.00k'], [649.5, '5.00k'], [692.5, ''], [722.5, '500.0'], [765.5, '0.0']];
        let grid = '<path d="M1806.500 69V807M70 528.500H1870M70 697.500H1870M70 807.500H1870"/>', axis = '';
        days.forEach((d, i) => {
            const x = Math.floor(157.5 + i * 93.6) + 0.5;
            grid += `<path d="M${x} 69V807"/>`;
            axis += `<text x="${x}" y="822">${d}</text>`;
        });
        prices.forEach(([y, label]) => {
            grid += `<path d="M70 ${y}H1812"/>`;
            axis += `<text x="1838" y="${y + 3.5}">${label}</text>`;
        });
        el('grid').innerHTML = grid;
        el('axis').innerHTML = axis;
    </script>
</body>
</html>
